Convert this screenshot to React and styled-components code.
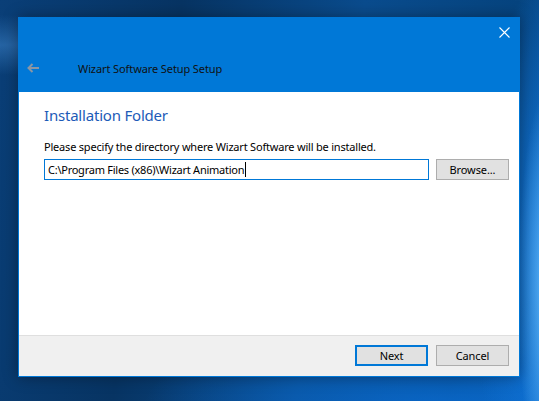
import React from "react";
import styled, { createGlobalStyle } from "styled-components";

const Global = createGlobalStyle`
  html, body { margin: 0; padding: 0; }
  body { font-family: "Noto Sans", "Liberation Sans", sans-serif; }
  * { box-sizing: border-box; }
`;

const Desktop = styled.div`
  width: 539px;
  height: 401px;
  overflow: hidden;
  padding: 17px 0 0 18px;
  background:
    radial-gradient(ellipse 30px 200px at 548px 290px, rgba(110, 195, 255, 0.85), rgba(30, 130, 230, 0) 100%),
    radial-gradient(ellipse 90px 280px at 560px 250px, rgba(20, 125, 230, 0.95), rgba(20, 120, 225, 0) 100%),
    radial-gradient(ellipse 260px 30px at 0px 45px, rgba(60, 130, 200, 0.55), rgba(60, 130, 200, 0) 100%),
    radial-gradient(ellipse 300px 120px at 440px 420px, rgba(10, 110, 215, 0.9), rgba(10, 110, 215, 0) 100%),
    linear-gradient(100deg, #0a3f78 0%, #073463 30%, #0a4c8e 60%, #06447f 85%, #0a5aa8 100%);
`;

const Window = styled.div`
  width: 502px;
  height: 360px;
  border: 1px solid #0078d7;
  display: flex;
  flex-direction: column;
  background: #ffffff;
  box-shadow: 0 0 14px rgba(0, 0, 0, 0.35);
`;

const Header = styled.div`
  height: 74px;
  background: #0078d7;
  display: flex;
  flex-direction: column;
`;

const TopBar = styled.div`
  height: 28px;
  display: flex;
  justify-content: flex-end;
`;

const CloseButton = styled.div`
  width: 30px;
  height: 28px;
  display: flex;
  align-items: center;
  justify-content: center;
  padding-top: 1px;
`;

const TitleRow = styled.div`
  flex: 1;
  display: flex;
  align-items: center;
  padding: 0 0 0 8px;
  margin-top: -3px;
`;

const BackArrow = styled.div`
  width: 12px;
  height: 10px;
  display: flex;
  margin-right: 39px;
`;

const Text = styled.div`
  font-size: 11px;
  letter-spacing: -0.2px;
  line-height: 16px;
  color: ${(p) => p.$color || "#000"};
`;

const Title = styled(Text)`
  padding-top: 3px;
  letter-spacing: -0.1px;
`;

const Body = styled.div`
  flex: 1;
  padding: 12px 10px 0 25px;
  display: flex;
  flex-direction: column;
`;

const Heading = styled.div`
  font-size: 15px;
  letter-spacing: -0.2px;
  line-height: 22px;
  color: #1c5bb8;
`;

const Instruction = styled(Text)`
  margin-top: 13px;
`;

const PathRow = styled.div`
  margin-top: 4px;
  display: flex;
  gap: 7px;
`;

const PathField = styled.div`
  flex: 1;
  height: 21px;
  border: 1px solid #0078d7;
  background: #fff;
  display: flex;
  align-items: center;
  padding-left: 3px;
  font-size: 11px;
  letter-spacing: -0.25px;
  color: #000;
  white-space: nowrap;
`;

const Caret = styled.span`
  display: inline-block;
  width: 1px;
  height: 15px;
  background: #000;
  margin-left: 1px;
`;

const Button = styled.div`
  width: 73px;
  height: 21px;
  background: #e1e1e1;
  border: ${(p) => (p.$default ? "2px solid #0078d7" : "1px solid #adadad")};
  display: flex;
  align-items: center;
  justify-content: center;
  font-size: 11px;
  letter-spacing: -0.1px;
  color: #000;
`;

const Footer = styled.div`
  height: 41px;
  background: #f0f0f0;
  border-top: 1px solid #dfdfdf;
  display: flex;
  justify-content: flex-end;
  gap: 8px;
  padding: 9px 10px 0 0;
`;

export default function App() {
  return (
    <>
      <Global />
      <Desktop>
        <Window>
          <Header>
            <TopBar>
              <CloseButton>
                <svg width="11" height="11" viewBox="0 0 11 11">
                  <path d="M0.5 0.5 L10.5 10.5 M10.5 0.5 L0.5 10.5" stroke="#ffffff" strokeWidth="1.1" fill="none" />
                </svg>
              </CloseButton>
            </TopBar>
            <TitleRow>
              <BackArrow>
                <svg width="12" height="10" viewBox="0 0 12 10">
                  <path d="M12 5 H1.5 M5.5 1 L1.5 5 L5.5 9" stroke="#8a96a4" strokeWidth="2" fill="none" />
                </svg>
              </BackArrow>
              <Title $color="#111">Wizart Software Setup Setup</Title>
            </TitleRow>
          </Header>
          <Body>
            <Heading>Installation Folder</Heading>
            <Instruction>Please specify the directory where Wizart Software will be installed.</Instruction>
            <PathRow>
              <PathField>
                C:\Program Files (x86)\Wizart Animation
                <Caret />
              </PathField>
              <Button>Browse...</Button>
            </PathRow>
          </Body>
          <Footer>
            <Button $default>Next</Button>
            <Button>Cancel</Button>
          </Footer>
        </Window>
      </Desktop>
    </>
  );
}
